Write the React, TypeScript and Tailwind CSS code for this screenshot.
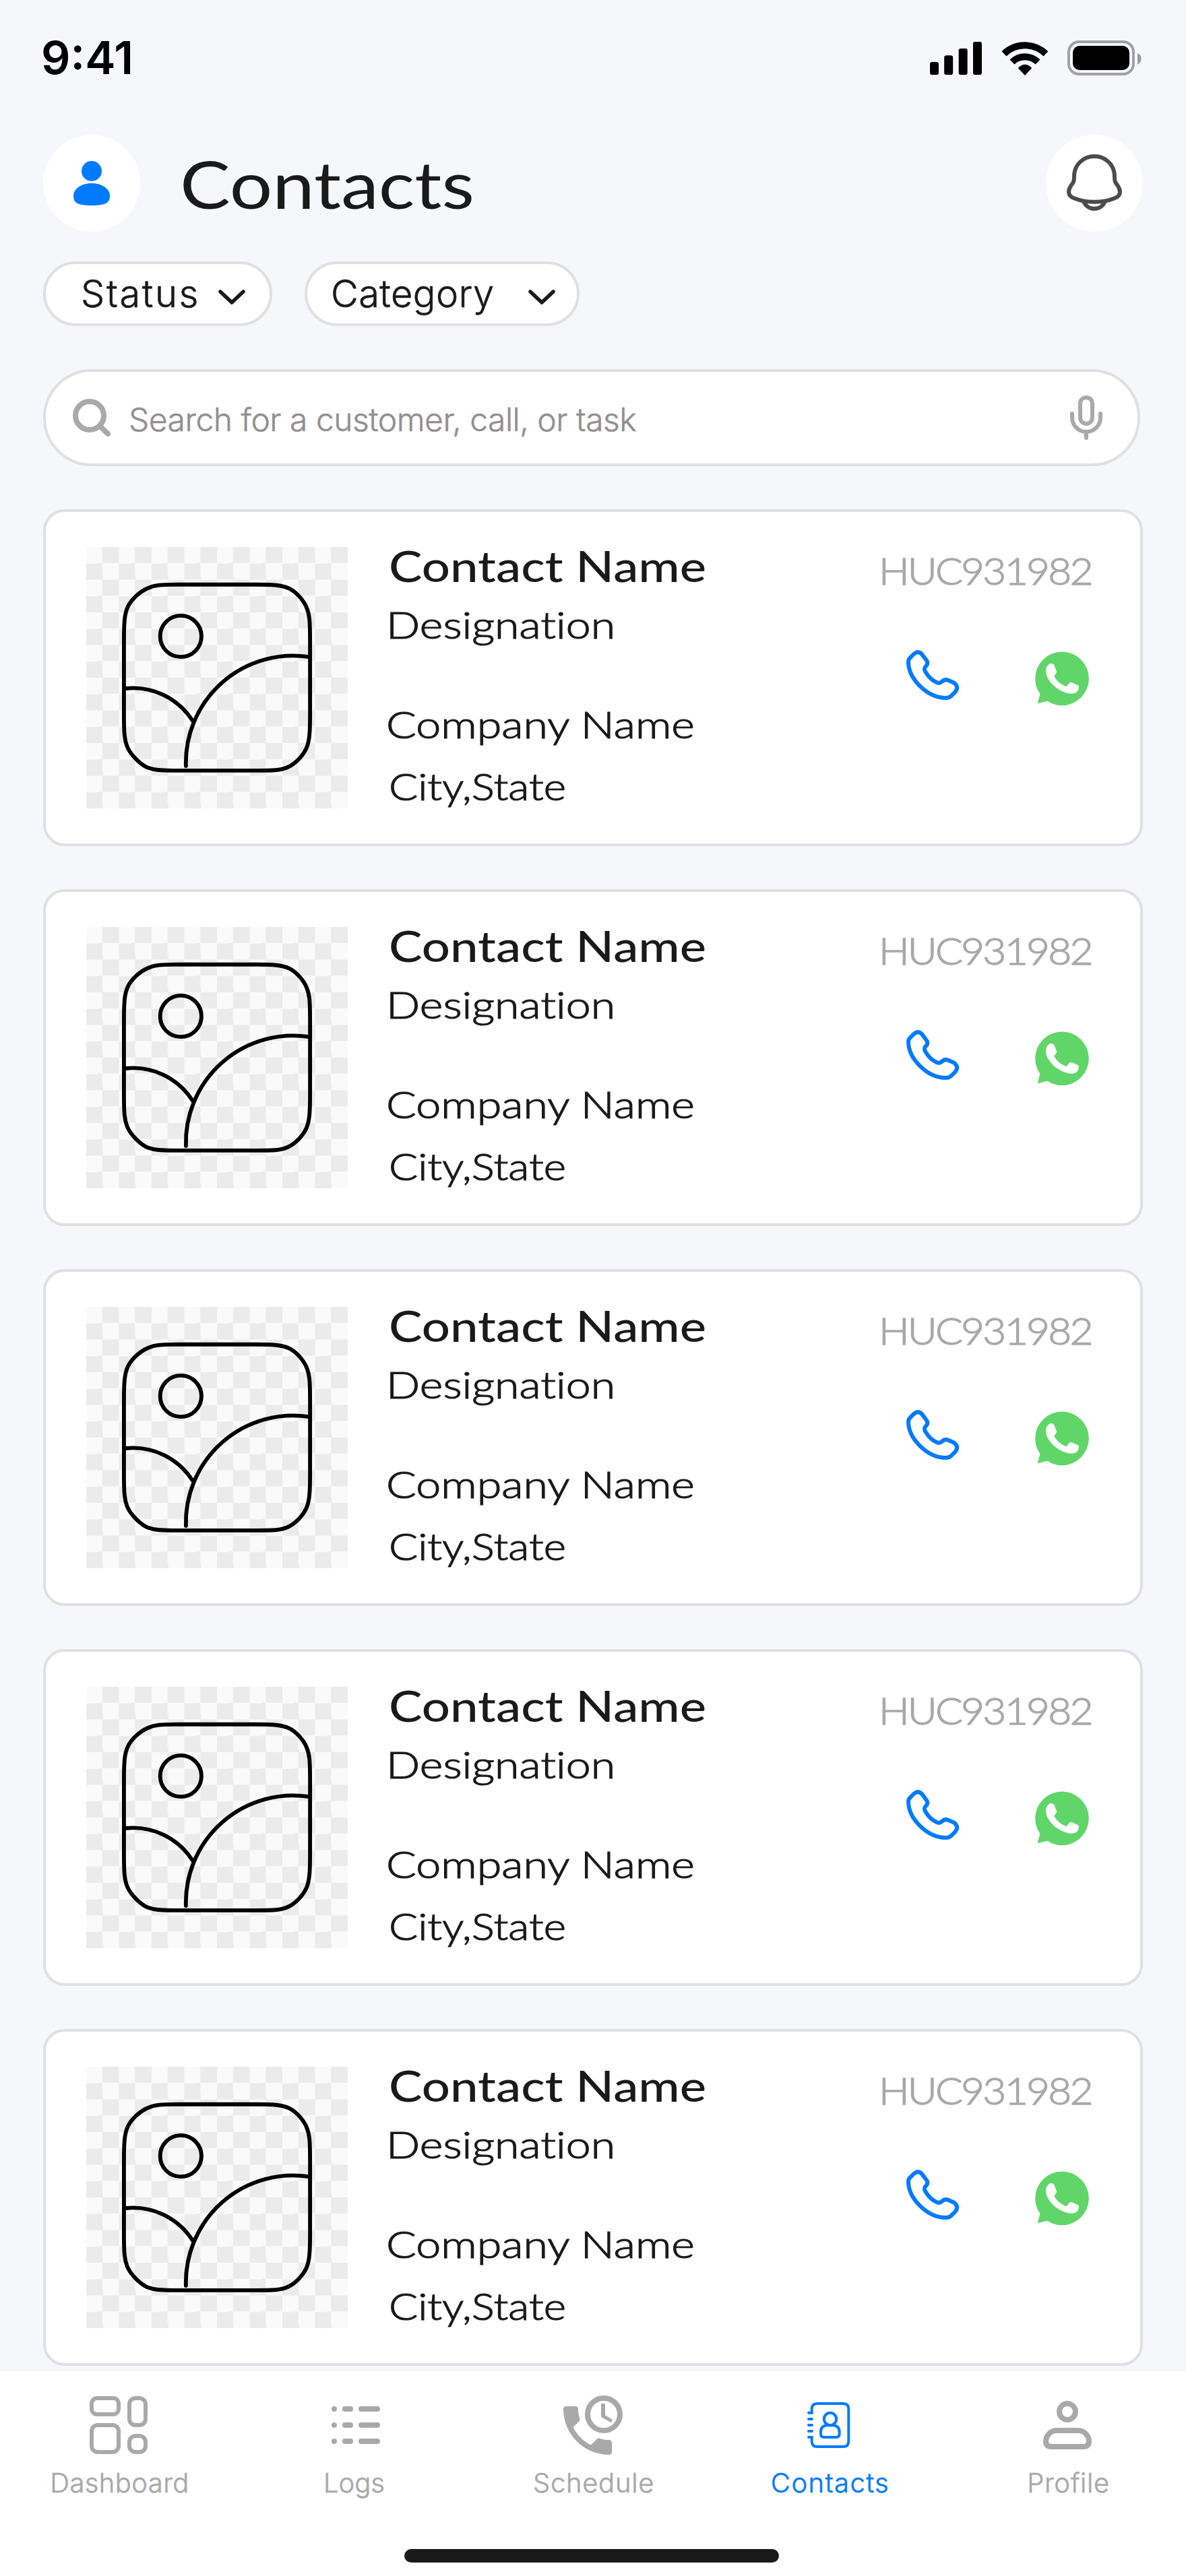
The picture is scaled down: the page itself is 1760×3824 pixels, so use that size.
import type { ReactNode } from 'react';

function StatusBar() {
  return (
    <div className="flex h-[200px] items-start justify-between pl-[61px] pr-[64px]">
      <span className="mt-[51px] text-[68px] font-semibold leading-[68px] text-black">9:41</span>
      <svg className="mt-[56px] h-[60px] w-[320px]" viewBox="18 18 960 180">
        <rect x="30" y="126" width="39" height="57" rx="10" />
        <rect x="93.500" y="97" width="39" height="86" rx="10" />
        <rect x="158" y="66" width="39" height="117" rx="10" />
        <rect x="222" y="36" width="39" height="147" rx="10" />
        <g fill="none" stroke="#000" strokeWidth="30">
          <path d="M360 89.500A134 134 0 0 1 546 89.500" />
          <path d="M396 126A82 82 0 0 1 510 126" />
        </g>
        <path d="M453 183L425 153Q453 126 481 153Z" stroke="#000" strokeWidth="4" strokeLinejoin="round" />
        <rect x="648" y="36" width="288" height="144" rx="46" fill="none" stroke="#a0a1a4" strokeWidth="12" />
        <rect x="666" y="54" width="252" height="108" rx="30" />
        <path d="M954 87Q971 95 971 111Q971 128 954 137Z" fill="#98999c" />
      </svg>
    </div>
  );
}

function Header() {
  return (
    <header className="flex h-[144px] items-start pl-[64px] pr-[64px]">
      <div className="size-[144px] rounded-full bg-white">
        <svg viewBox="0 0 144 144" fill="#007aff">
          <circle cx="72" cy="54" r="15" />
          <path d="M72 72C88 72 99 81 99 90.500C99 100 95 105 72 105C49 105 45 100 45 90.500C45 81 56 72 72 72Z" />
        </svg>
      </div>
      <h1 className="ml-[59px] origin-left scale-x-[1.167] font-[Lato,sans-serif] text-[96px] font-normal leading-[145px]">
        Contacts
      </h1>
      <div className="ml-auto size-[144px] rounded-full bg-white">
        <svg viewBox="546 450 432 432" fill="none" stroke="#4b4b4b" strokeWidth="18">
          <path d="M762 546C710 546 672 586 672 636C672 660 669 662 658 677C650 689 648 695 648 704C648 718 657 727 672 733C725 755 799 755 852 733C867 727 876 718 876 704C876 695 874 689 866 677C855 662 852 660 852 636C852 586 814 546 762 546Z" />
          <path d="M715 748A51 51 0 0 0 809 748" />
        </svg>
      </div>
    </header>
  );
}

function Chevron() {
  return (
    <svg className="h-[24px] w-[42px]" viewBox="0 0 42 24" fill="none" stroke="#1a1a1a" strokeWidth="5.500" strokeLinecap="round" strokeLinejoin="round">
      <path d="M4 4L21 20L38 4" />
    </svg>
  );
}

function Filters() {
  return (
    <div className="mt-[44px] flex gap-[48px] pl-[64px] text-[56px] font-light leading-[88px] [-webkit-text-stroke:0.6px_#1a1a1a]">
      <button className="flex h-[96px] w-[340px] items-center justify-between rounded-full border-4 border-[#e0e0e0] bg-white pl-[52px] pr-[35px]">
        <span className="tracking-[2.5px]">Status</span>
        <span className="mt-[9px]">
          <Chevron />
        </span>
      </button>
      <button className="flex h-[96px] w-[408px] items-center justify-between rounded-full border-4 border-[#e0e0e0] bg-white pl-[35px] pr-[31px]">
        <span className="tracking-[0.4px]">Category</span>
        <span className="mt-[9px]">
          <Chevron />
        </span>
      </button>
    </div>
  );
}

function SearchBar() {
  return (
    <div className="ml-[64px] mt-[64px] flex h-[144px] w-[1628px] items-center rounded-full border-4 border-[#e0e0e0] bg-white pl-[36px] pr-[48px]">
      <svg className="size-[64px]" viewBox="104 588 64 64" fill="none" stroke="#a9a9a9" strokeWidth="8" strokeLinecap="round">
        <circle cx="133" cy="617" r="21" />
        <path d="M149 633L160 644" />
      </svg>
      <span className="ml-[23px] mt-[5px] text-[48px] font-light leading-[64px] tracking-[-0.5px] text-[#938f8f] [-webkit-text-stroke:0.5px_#938f8f]">
        Search for a customer, call, or task
      </span>
      <svg className="ml-auto h-[72px] w-[56px]" viewBox="252 252 168 216" fill="none" stroke="#a9a9a9" strokeWidth="18" strokeLinecap="round">
        <rect x="309" y="270" width="54" height="117" rx="27" />
        <path d="M273 342V360A63 63 0 0 0 399 360V342M336 423V450" />
      </svg>
    </div>
  );
}

function Placeholder() {
  return (
    <div className="size-[388px] bg-[repeating-conic-gradient(#ebebeb_0_25%,#fafafa_0_50%)] bg-[length:48.5px_48.5px]">
      <svg viewBox="255.550 209.090 1126.750 1126.750" fill="none" stroke="#000" strokeWidth="17" strokeLinecap="round">
        <path d="M655 371H985C1060 371 1098 373 1130 388C1160 402 1193 440 1205 470C1218 500 1220 530 1220 610V935C1220 1010 1217 1046 1205 1075C1192 1105 1160 1142 1125 1158C1092 1173 1060 1173 985 1173H655C570 1173 548 1170 520 1160C490 1148 446 1105 432 1070C420 1040 418 1010 418 935V610C418 530 421 495 435 466C450 435 487 401 520 387C550 373 580 371 655 371Z" />
        <circle cx="663" cy="594" r="89" />
        <path d="M424 819A303 303 0 0 1 713 957" />
        <path d="M685 1153A462 462 0 0 1 1216 683" />
      </svg>
    </div>
  );
}

function ContactCard() {
  return (
    <article className="flex h-[500px] items-start rounded-[32px] border-4 border-[#e0e0e0] bg-white pl-[60px]">
      <div className="mt-[52px]">
        <Placeholder />
      </div>
      <div className="ml-[56px] mt-[44px] flex flex-col items-start whitespace-nowrap font-[Lato,sans-serif] text-[56px] font-light leading-[64px] [font-variant-ligatures:none] [-webkit-text-stroke:1.2px_#1a1a1a]">
        <h2 className="ml-[5px] origin-left scale-x-[1.161] text-[64px] font-medium leading-[72px] [-webkit-text-stroke:0px]">
          Contact Name
        </h2>
        <p className="ml-[1px] mt-[19px] origin-left scale-x-[1.183]">Designation</p>
        <p className="ml-[1px] mt-[84px] origin-left scale-x-[1.185]">Company Name</p>
        <p className="ml-[5px] mt-[28px] origin-left scale-x-[1.14]">City,State</p>
      </div>
      <div className="ml-auto mt-[55px] flex w-[388px] flex-col items-start">
        <span className="origin-left scale-x-[1.08] font-[Lato,sans-serif] text-[56px] font-light leading-[64px] tracking-[-2.6px] text-[#a9a9a9] [-webkit-text-stroke:1.3px_#a9a9a9]">
          HUC931982
        </span>
        <div className="mt-[85px] flex gap-[112px] pl-[40px]">
          <svg className="size-[80px]" viewBox="132 102 240 240" fill="none" stroke="#007aff" strokeWidth="18" strokeLinejoin="round">
            <path d="M144 157Q144 147 152 139L168 123Q187 106 203 122L222 147Q235 160 224 175C214 184 213 190 220 202C232 222 253 243 272 250C282 254 288 251 294 245Q306 233 323 240L348 251Q370 270 353 291L334 310Q327 318 310 318C230 318 144 235 144 157Z" />
          </svg>
          <svg className="h-[84px] w-[80px]" viewBox="708 102 240 252">
            <circle cx="828" cy="232" r="119.500" fill="#60d669" />
            <path d="M731 298L719 343L768 331Z" fill="#60d669" />
            <path d="M771 167Q786 162 793 172L804 200Q806 205 793 221Q806 250 847 268L861 251Q865 247 873 250L899 262Q904 264 903 270Q902 290 885 297Q860 305 820 284C788 267 755 230 756 197Q757 177 771 167Z" fill="#fff" />
          </svg>
        </div>
      </div>
    </article>
  );
}

function Tab({ label, labelClass, box, children }: { label: string; labelClass: string; box: string; children: ReactNode }) {
  return (
    <div className="flex flex-col items-center pt-[32px]">
      <svg className="size-[96px]" viewBox={box}>
        {children}
      </svg>
      <span className={`mt-[14px] text-[40px] font-light leading-[48px] ${labelClass}`}>{label}</span>
    </div>
  );
}

function TabBar() {
  return (
    <nav className="mt-[8px] h-[304px] bg-white">
      <div className="grid grid-cols-5">
        <Tab label="Dashboard" labelClass="text-[#a9a9a9] tracking-[0.4px] pl-[3px] [-webkit-text-stroke:0.6px_#a9a9a9]" box="0 0 96 96">
          <g fill="none" stroke="#a9a9a9" strokeWidth="6">
            <rect x="8" y="8" width="40" height="24" rx="8" />
            <rect x="64" y="8" width="24" height="40" rx="9" />
            <rect x="8" y="48" width="40" height="40" rx="9" />
            <rect x="64" y="64" width="24" height="24" rx="9" />
          </g>
        </Tab>
        <Tab label="Logs" labelClass="text-[#a9a9a9] pr-[5px] [-webkit-text-stroke:0.6px_#a9a9a9]" box="0 0 96 96">
          {[20, 44, 68].map((y) => (
            <g key={y} fill="#a9a9a9">
              <rect x="12" y={y} width="8" height="8" rx="4" />
              <rect x="28" y={y} width="16" height="8" rx="4" />
              <rect x="52" y={y} width="32" height="8" rx="4" />
            </g>
          ))}
        </Tab>
        <Tab label="Schedule" labelClass="text-[#a9a9a9] tracking-[0.7px] pl-[2px] [-webkit-text-stroke:0.6px_#a9a9a9]" box="36 36 288 288">
          <path
            transform="translate(12 60) scale(12)"
            fill="#a9a9a9"
            d="M6.620 10.790c1.440 2.830 3.760 5.140 6.590 6.590l2.200-2.200c.27-.27.67-.36 1.020-.24 1.120.37 2.330.57 3.570.57.55 0 1 .45 1 1V20c0 .55-.45 1-1 1-9.390 0-17-7.610-17-17 0-.55.45-1 1-1h3.500c.55 0 1 .45 1 1 0 1.250.2 2.450.57 3.570.11.35.03.74-.25 1.020l-2.200 2.200z"
          />
          <circle cx="228" cy="132" r="72" fill="none" stroke="#a9a9a9" strokeWidth="24" />
          <path d="M216 84H234V136L267 156L260 169L216 144Z" fill="#a9a9a9" />
        </Tab>
        <Tab label="Contacts" labelClass="text-[#007aff] tracking-[1.4px] [-webkit-text-stroke:0.6px_#007aff]" box="1092 36 288 288">
          <g fill="none" stroke="#007aff" strokeWidth="12" strokeLinecap="round">
            <path d="M1140 125H1154V109Q1154 84 1179 84H1293Q1318 84 1318 109V251Q1318 276 1293 276H1179Q1154 276 1154 251V234H1140M1140 153H1155M1140 180H1155M1140 207H1155" />
            <circle cx="1236" cy="153" r="27.500" />
            <path d="M1224 181H1248Q1277 182 1277 211V220Q1277 234 1263 234H1208Q1194 234 1194 220V211Q1194 182 1224 181Z" />
          </g>
        </Tab>
        <Tab label="Profile" labelClass="text-[#a9a9a9] tracking-[0.6px] pl-[3px] [-webkit-text-stroke:0.6px_#a9a9a9]" box="0 0 96 96">
          <g fill="none" stroke="#a9a9a9" strokeWidth="8">
            <circle cx="48" cy="28" r="12" />
            <path d="M32 56H64C74 56 80 65 80 72Q80 80 72 80H24Q16 80 16 72C16 65 22 56 32 56Z" />
          </g>
        </Tab>
      </div>
      <div className="mx-auto mt-[74px] h-[20px] w-[556px] -translate-x-[2px] rounded-full bg-[#1a1a1a]" />
    </nav>
  );
}

export default function App() {
  return (
    <div className="h-[3824px] w-[1760px] overflow-hidden bg-[#f5f7fb] font-[Inter,sans-serif] text-[#1a1a1a]">
      <StatusBar />
      <Header />
      <Filters />
      <SearchBar />
      <main className="mt-[64px] flex flex-col gap-[64px] px-[64px]">
        {[1, 2, 3, 4, 5].map((id) => (
          <ContactCard key={id} />
        ))}
      </main>
      <TabBar />
    </div>
  );
}
